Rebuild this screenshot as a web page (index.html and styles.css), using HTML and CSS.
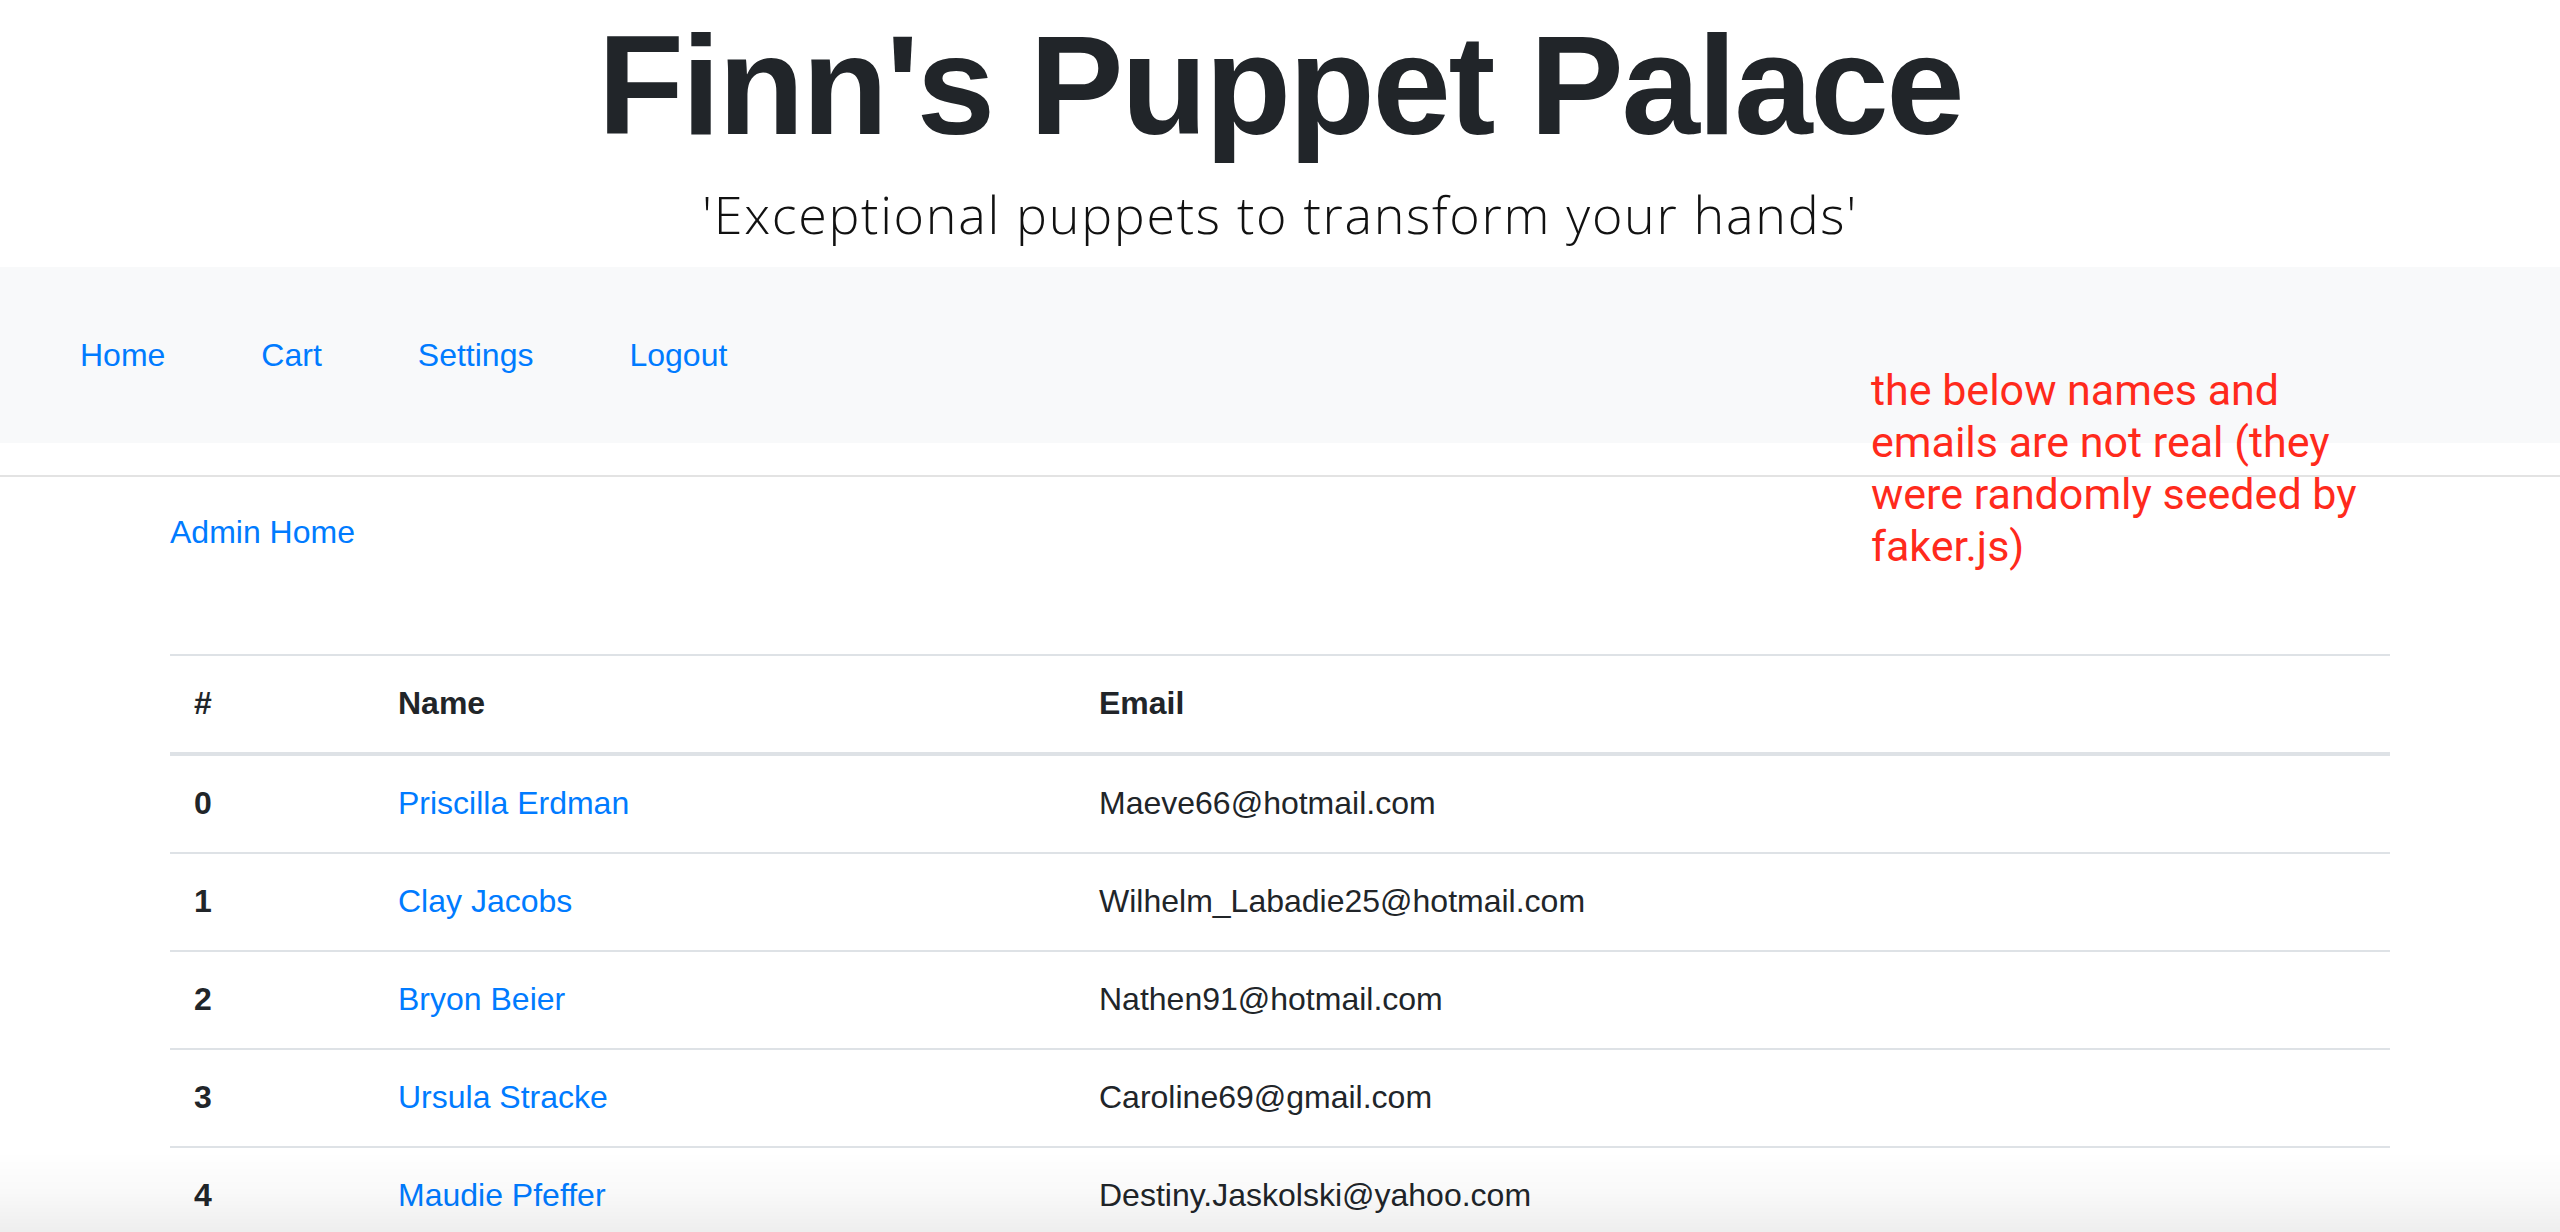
FILE: index.html
```html
<!DOCTYPE html>
<html lang="en">
<head>
<meta charset="utf-8">
<title>Finn's Puppet Palace - Admin</title>
<link rel="stylesheet" href="styles.css">
</head>
<body>
<header class="masthead">
  <h1 class="title">Finn's Puppet Palace</h1>
  <p class="tagline">'Exceptional puppets to transform your hands'</p>
</header>
<nav class="navbar">
  <a class="nav-link" href="#">Home</a>
  <a class="nav-link" href="#">Cart</a>
  <a class="nav-link" href="#">Settings</a>
  <a class="nav-link" href="#">Logout</a>
</nav>
<hr class="divider">
<main class="container">
  <a class="admin-link" href="#">Admin Home</a>
  <table class="table">
    <colgroup>
      <col class="col-num">
      <col class="col-name">
      <col class="col-email">
    </colgroup>
    <thead>
      <tr><th>#</th><th>Name</th><th>Email</th></tr>
    </thead>
    <tbody>
      <tr><th>0</th><td><a href="#">Priscilla Erdman</a></td><td>Maeve66@hotmail.com</td></tr>
      <tr><th>1</th><td><a href="#">Clay Jacobs</a></td><td>Wilhelm_Labadie25@hotmail.com</td></tr>
      <tr><th>2</th><td><a href="#">Bryon Beier</a></td><td>Nathen91@hotmail.com</td></tr>
      <tr><th>3</th><td><a href="#">Ursula Stracke</a></td><td>Caroline69@gmail.com</td></tr>
      <tr><th>4</th><td><a href="#">Maudie Pfeffer</a></td><td>Destiny.Jaskolski@yahoo.com</td></tr>
    </tbody>
  </table>
</main>
<p class="annotation">the below names and<br>emails are not real (they<br>were randomly seeded by<br>faker.js)</p>
<div class="bottom-shade"></div>
</body>
</html>
```
FILE: styles.css
```css
html, body {
  margin: 0;
  padding: 0;
}
body {
  font-family: "Liberation Sans", Arial, Helvetica, sans-serif;
  font-size: 32px;
  line-height: 48px;
  color: #212529;
  background: #ffffff;
  overflow: hidden;
  height: 1232px;
}
a {
  color: #007bff;
  text-decoration: none;
}
.masthead {
  text-align: center;
}
.title {
  margin: 0;
  font-family: "Liberation Sans", Arial, sans-serif;
  font-weight: 700;
  font-size: 141px;
  line-height: 170px;
  height: 170px;
  letter-spacing: -2.4px;
  color: #212529;
}
.tagline {
  margin: 0;
  font-family: "Open Sans", "Liberation Sans", sans-serif;
  font-weight: 300;
  font-size: 52px;
  line-height: 70px;
  padding: 9px 0 18px;
  letter-spacing: 1.7px;
  color: #111;
}
.navbar {
  display: flex;
  align-items: center;
  background: #f8f9fa;
  height: 176px;
  box-sizing: border-box;
  padding: 0 32px;
}
.nav-link {
  padding: 0 48px;
  line-height: 48px;
}
.divider {
  margin: 32px 0 0;
  border: 0;
  height: 2px;
  background: #e3e3e3;
}
.container {
  padding: 31px 170px 0;
}
.admin-link {
  display: block;
  width: max-content;
  line-height: 48px;
}
.table {
  width: 100%;
  margin-top: 98px;
  border-collapse: collapse;
  table-layout: fixed;
}
.col-num { width: 204px; }
.col-name { width: 701px; }
.table th,
.table td {
  text-align: left;
  padding: 23px 24px 25px;
  line-height: 48px;
  border-top: 2px solid #dee2e6;
  vertical-align: top;
}
.table th {
  font-weight: 700;
}
.table thead th {
  border-bottom: 4px solid #dee2e6;
}
.annotation {
  position: absolute;
  left: 1871px;
  top: 364px;
  margin: 0;
  font-family: Roboto, "Liberation Sans", sans-serif;
  font-size: 43px;
  line-height: 52px;
  color: #ff2a1c;
}
.bottom-shade {
  position: fixed;
  left: 0;
  right: 0;
  bottom: 0;
  height: 80px;
  pointer-events: none;
  background: linear-gradient(to bottom, rgba(0,0,0,0) 0%, rgba(0,0,0,0.025) 50%, rgba(0,0,0,0.065) 100%);
}
```
